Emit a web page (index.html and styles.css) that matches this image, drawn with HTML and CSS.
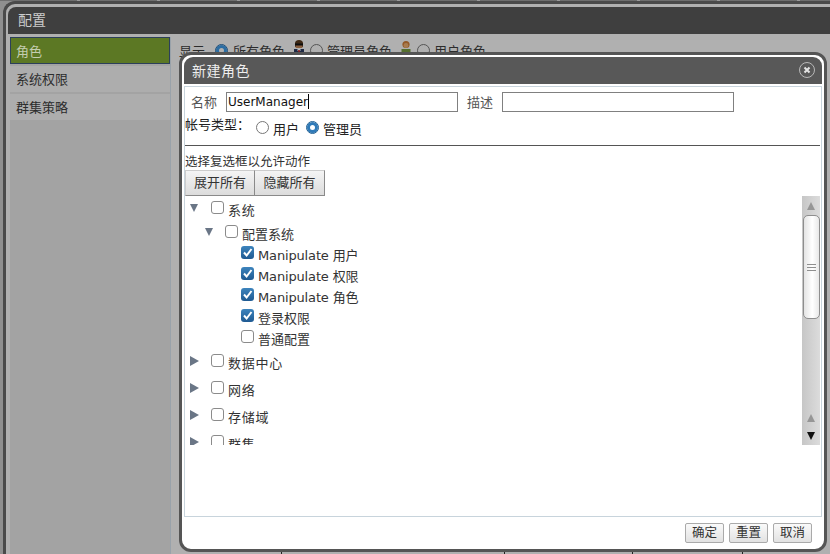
FILE: index.html
```html
<!DOCTYPE html>
<html lang="zh">
<head>
  <meta charset="UTF-8" />
  <title>配置</title>
  <link rel="stylesheet" href="styles.css">
</head>
<body>
  <div class="top-strip"></div>
  <div class="window">
    <div class="window-title">配置</div>
    <div class="window-body">
      <div class="sidebar">
        <div class="side-item active">角色</div>
        <div class="side-item">系统权限</div>
        <div class="side-item">群集策略</div>
      </div>
      <div class="content">
        <div class="filter">
          <span>显示</span>
          <span class="radio on"></span><span>所有角色</span>
          <svg class="person" width="12" height="18" viewBox="0 0 12 18"><path d="M2 3.5a4 3.5 0 0 1 8 0V7H2z" fill="#3e2814"/><rect x="2.5" y="4" width="7" height="4" rx="1" fill="#8a5f3e"/><rect x="2" y="3.5" width="8" height="2" fill="#0c0c0c"/><path d="M1 9h10v9H1z" fill="#1f2a45"/><path d="M4.5 9h3v2h-3z" fill="#bbb"/><path d="M5.2 10h1.6v7H5.2z" fill="#8f1c1c"/></svg>
          <span class="radio"></span><span>管理员角色</span>
          <svg class="person" width="12" height="18" viewBox="0 0 12 18"><circle cx="6" cy="4.5" r="3.6" fill="#945a28"/><circle cx="6" cy="5.5" r="2.4" fill="#a87c50"/><path d="M1.5 9h9v9h-9z" fill="#556f2e"/></svg>
          <span class="radio"></span><span>用户角色</span>
        </div>
        <div class="grid-edge">
          <span class="cell first"></span>
          <span class="cell second"></span>
          <span class="cell third"></span>
          <span class="cell fourth"></span>
          <span class="cell"></span>
        </div>
      </div>
    </div>
  </div>

  <div class="modal">
    <div class="modal-title">
      <span>新建角色</span>
      <svg class="close" width="18" height="18" viewBox="0 0 18 18">
        <circle cx="9" cy="9" r="7.5" fill="none" stroke="#b8b8b8" stroke-width="1"/>
        <path d="M6.5 6.5l5 5M11.5 6.5l-5 5" stroke="#e4e4e4" stroke-width="2"/>
      </svg>
    </div>
    <div class="modal-body">
      <div class="name-row">
        <label class="field-label">名称</label>
        <div class="text-input name-input">UserManager<span class="caret"></span></div>
        <label class="field-label desc-label">描述</label>
        <div class="text-input desc-input"></div>
      </div>
      <div class="type-row">
        <span class="type-label">帐号类型：</span>
        <span class="radio"></span><span class="type-opt">用户</span>
        <span class="radio on"></span><span class="type-opt">管理员</span>
      </div>
      <div class="rule"></div>
      <div class="hint">选择复选框以允许动作</div>
      <div class="toggle-group">
        <div class="toggle">展开所有</div>
        <div class="toggle">隐藏所有</div>
      </div>
      <div class="tree-panel">
        <div class="tree">
          <div class="row top r27"><span class="arrow down"></span><span class="check"></span><span class="lbl">系统</span></div>
          <div class="row sub r21"><span class="arrow down"></span><span class="check"></span><span>配置系统</span></div>
          <div class="row leaf r21"><span class="check on"><svg width="13" height="13" viewBox="0 0 13 13"><path d="M3 6.5l2.6 3L10.5 3" fill="none" stroke="#fff" stroke-width="2"/></svg></span><span class="latin">Manipulate 用户</span></div>
          <div class="row leaf r21"><span class="check on"><svg width="13" height="13" viewBox="0 0 13 13"><path d="M3 6.5l2.6 3L10.5 3" fill="none" stroke="#fff" stroke-width="2"/></svg></span><span class="latin">Manipulate 权限</span></div>
          <div class="row leaf r21"><span class="check on"><svg width="13" height="13" viewBox="0 0 13 13"><path d="M3 6.5l2.6 3L10.5 3" fill="none" stroke="#fff" stroke-width="2"/></svg></span><span class="latin">Manipulate 角色</span></div>
          <div class="row leaf r21"><span class="check on"><svg width="13" height="13" viewBox="0 0 13 13"><path d="M3 6.5l2.6 3L10.5 3" fill="none" stroke="#fff" stroke-width="2"/></svg></span><span>登录权限</span></div>
          <div class="row leaf r21"><span class="check"></span><span>普通配置</span></div>
          <div class="row top r27"><span class="arrow right"></span><span class="check"></span><span class="lbl">数据中心</span></div>
          <div class="row top r27"><span class="arrow right"></span><span class="check"></span><span class="lbl">网络</span></div>
          <div class="row top r27"><span class="arrow right"></span><span class="check"></span><span class="lbl">存储域</span></div>
          <div class="row top r27"><span class="arrow right"></span><span class="check"></span><span class="lbl">群集</span></div>
        </div>
        <div class="scrollbar">
          <span class="tri up-top"></span>
          <div class="thumb"><span></span><span></span><span></span></div>
          <span class="tri up-low"></span>
          <span class="tri down-low"></span>
        </div>
      </div>
    </div>
    <div class="modal-footer">
      <div class="btn">确定</div>
      <div class="btn">重置</div>
      <div class="btn">取消</div>
    </div>
  </div>
</body>
</html>
```

FILE: styles.css
```css
html, body {
  margin: 0;
  padding: 0;
  height: 100%;
}

body {
  position: relative;
  width: 830px;
  height: 554px;
  overflow: hidden;
  background-color: #8f8f8f;
  font-family: "DejaVu Sans", "Noto Sans CJK SC", sans-serif;
  font-size: 13px;
  color: #222;
}

.top-strip {
  height: 1px;
  background: repeating-linear-gradient(to right, #6e6e6e 0, #6e6e6e 77px, #9a9a9a 77px, #9a9a9a 80px);
}

.window {
  margin-left: 3px;
  height: 553px;
  box-sizing: border-box;
  border: 3px solid #4a4a4a;
  border-right: none;
  border-bottom: none;
  border-top-left-radius: 12px;
  background-color: #b0b0b0;
  display: flex;
  flex-direction: column;
  overflow: hidden;
}

.window-title {
  height: 27px;
  line-height: 26px;
  margin: 3px 0 0 2px;
  padding-left: 10px;
  background-color: #3f3f3f;
  border-top-left-radius: 8px;
  color: #ccc;
  font-size: 14px;
}

.window-body {
  flex-grow: 1;
  display: flex;
  padding: 3px 0 0 4px;
}

.sidebar {
  width: 160px;
  display: flex;
  flex-direction: column;
  gap: 2px;
  background-color: #a3a3a3;
  border-right: 1px solid #99a2aa;
}

.side-item {
  box-sizing: border-box;
  height: 26px;
  line-height: 28px;
  padding-left: 6px;
  background-color: #adadad;
  color: #2c2c2c;
}

.side-item.active {
  height: 27px;
  line-height: 27px;
  border: 1px solid #2c3f5a;
  padding-left: 5px;
  background-color: #5c7824;
  color: #c4cdb0;
}

.content {
  flex-grow: 1;
  display: flex;
  flex-direction: column;
  padding: 4px 0 0 8px;
}

.filter {
  display: flex;
  align-items: center;
  height: 18px;
  color: #2c2c2c;
}

.filter .radio {
  margin: 0 4px 0 10px;
  border-color: #555;
  background: #b0b0b0;
}

.filter .radio.on {
  margin-right: 5px;
  border-color: #1c4f7c;
  box-shadow: inset 0 0 0 3px #2b6da3;
}

.filter .person {
  margin: -2px 0 0 8px;
}

.filter .person + .radio {
  margin-left: 5px;
}

.grid-edge {
  margin-top: auto;
  height: 2px;
  display: flex;
}

.cell {
  flex-grow: 1;
  border-left: 1px solid #222;
}

.cell.first {
  flex: 0 0 102px;
  border-left: none;
}

.cell.second {
  flex: 0 0 222px;
}

.cell.third {
  flex: 0 0 127px;
}

.cell.fourth {
  flex: 0 0 109px;
}

.radio {
  display: inline-block;
  flex-shrink: 0;
  box-sizing: border-box;
  width: 13px;
  height: 13px;
  border: 1px solid #777;
  border-radius: 50%;
  background: #fff;
}

.radio.on {
  border-color: #1f5f93;
  box-shadow: inset 0 0 0 3px #2f7ab8;
}

.modal {
  position: absolute;
  left: 179px;
  top: 52px;
  width: 648px;
  height: 500px;
  box-sizing: border-box;
  border: 3px solid #555;
  border-radius: 12px;
  background-color: #fff;
  padding: 2px 2px 0;
  display: flex;
  flex-direction: column;
}

.modal-title {
  height: 27px;
  flex-shrink: 0;
  display: flex;
  align-items: center;
  justify-content: space-between;
  padding: 0 6px 2px 8px;
  box-sizing: border-box;
  background-color: #585858;
  border-radius: 9px 9px 0 0;
  color: #eee;
  font-size: 14px;
  letter-spacing: 0.5px;
}

.modal-body {
  height: 431px;
  flex-shrink: 0;
  margin-top: 2px;
  box-sizing: border-box;
  border: 1px solid #c8d4dc;
  display: flex;
  flex-direction: column;
}

.name-row {
  display: flex;
  align-items: center;
  height: 20px;
  margin-top: 5px;
  padding-left: 6px;
}

.field-label {
  position: relative;
  top: -1px;
  color: #555;
  width: 35px;
}

.text-input {
  box-sizing: border-box;
  height: 20px;
  line-height: 18px;
  border: 1px solid #808080;
  background: #fff;
  color: #111;
  font-size: 12px;
  padding-left: 1px;
  white-space: nowrap;
}

.name-input {
  width: 232px;
}

.desc-label {
  margin-left: 9px;
}

.desc-input {
  width: 232px;
}

.caret {
  display: inline-block;
  width: 1px;
  height: 15px;
  background: #000;
  vertical-align: -3px;
}

.type-row {
  display: flex;
  align-items: center;
  height: 24px;
  margin-top: 2px;
  padding-top: 2px;
  box-sizing: border-box;
}

.type-label {
  margin-right: 6px;
  position: relative;
  top: -4px;
}

.type-opt {
  margin: 0 7px 0 4px;
  position: relative;
  top: 1px;
}

.rule {
  height: 1px;
  margin: 7px 1px 0 0;
  background-color: #555;
}

.hint {
  margin-top: 9px;
  line-height: 14px;
  height: 15px;
  color: #333;
  font-size: 12.5px;
}

.toggle-group {
  display: flex;
  height: 26px;
}

.toggle {
  width: 70px;
  box-sizing: border-box;
  line-height: 24px;
  text-align: center;
  border: 1px solid #8a8a8a;
  border-left: none;
  border-top-color: #ccc;
  background: linear-gradient(#f4f4f4, #dcdcdc);
  color: #333;
}

.toggle:first-child {
  border-left: 1px solid #ccc;
}

.tree-panel {
  height: 249px;
  overflow: hidden;
  display: flex;
}

.tree {
  flex-grow: 1;
  overflow: hidden;
}

.row {
  display: flex;
  align-items: center;
  color: #333;
}

.r21 { height: 21px; }
.r27 { height: 27px; }

.row.top { padding-left: 5px; }
.row.sub { padding-left: 20px; }
.row.leaf { padding-left: 56px; }

.row.top .lbl {
  letter-spacing: 0.75px;
}

.latin {
  letter-spacing: -0.15px;
}

.arrow {
  flex-shrink: 0;
  display: block;
  width: 0;
  height: 0;
  position: relative;
  top: -2px;
}

.arrow.down {
  margin-right: 13px;
  border-left: 4.5px solid transparent;
  border-right: 4.5px solid transparent;
  border-top: 8px solid #6a7686;
}

.arrow.right {
  margin-right: 12px;
  border-top: 5px solid transparent;
  border-bottom: 5px solid transparent;
  border-left: 9px solid #6a7686;
}

.sub .arrow.down {
  margin-right: 12px;
}

.check {
  flex-shrink: 0;
  box-sizing: border-box;
  width: 13px;
  height: 13px;
  margin-right: 4px;
  border: 1px solid #8b8b8b;
  border-radius: 3px;
  background: #fff;
  position: relative;
  top: -2px;
  display: block;
}

.check.on {
  border: none;
  background: linear-gradient(#3d84bd, #1f5a92);
}

.check svg {
  display: block;
}

.scrollbar {
  width: 18px;
  flex-shrink: 0;
  margin-right: 1px;
  position: relative;
  background: linear-gradient(to right, #c6c6c6, #dcdcdc);
}

.tri {
  position: absolute;
  left: 5px;
  width: 0;
  height: 0;
  border-left: 4px solid transparent;
  border-right: 4px solid transparent;
}

.tri.up-top { top: 6px; border-bottom: 8px solid #969696; }
.tri.up-low { top: 218px; border-bottom: 8px solid #969696; }
.tri.down-low { top: 236px; border-top: 8px solid #111; }

.thumb {
  position: absolute;
  left: 1px;
  top: 19px;
  box-sizing: border-box;
  width: 17px;
  height: 104px;
  border: 1px solid #8e8e8e;
  border-radius: 5px;
  background: linear-gradient(to right, #e4e4e4, #fff 55%, #e8e8e8);
  display: flex;
  flex-direction: column;
  align-items: center;
  justify-content: center;
  gap: 2px;
}

.thumb span {
  display: block;
  width: 9px;
  height: 1px;
  background: #8e8e8e;
}

.modal-footer {
  display: flex;
  justify-content: flex-end;
  gap: 5px;
  margin-top: 6px;
  padding-right: 10px;
}

.btn {
  box-sizing: border-box;
  width: 39px;
  height: 20px;
  line-height: 18px;
  text-align: center;
  border: 1px solid #aaa;
  border-radius: 2px;
  background: linear-gradient(#fafafa, #e2e2e2);
  color: #333;
  font-size: 12.5px;
}
```
